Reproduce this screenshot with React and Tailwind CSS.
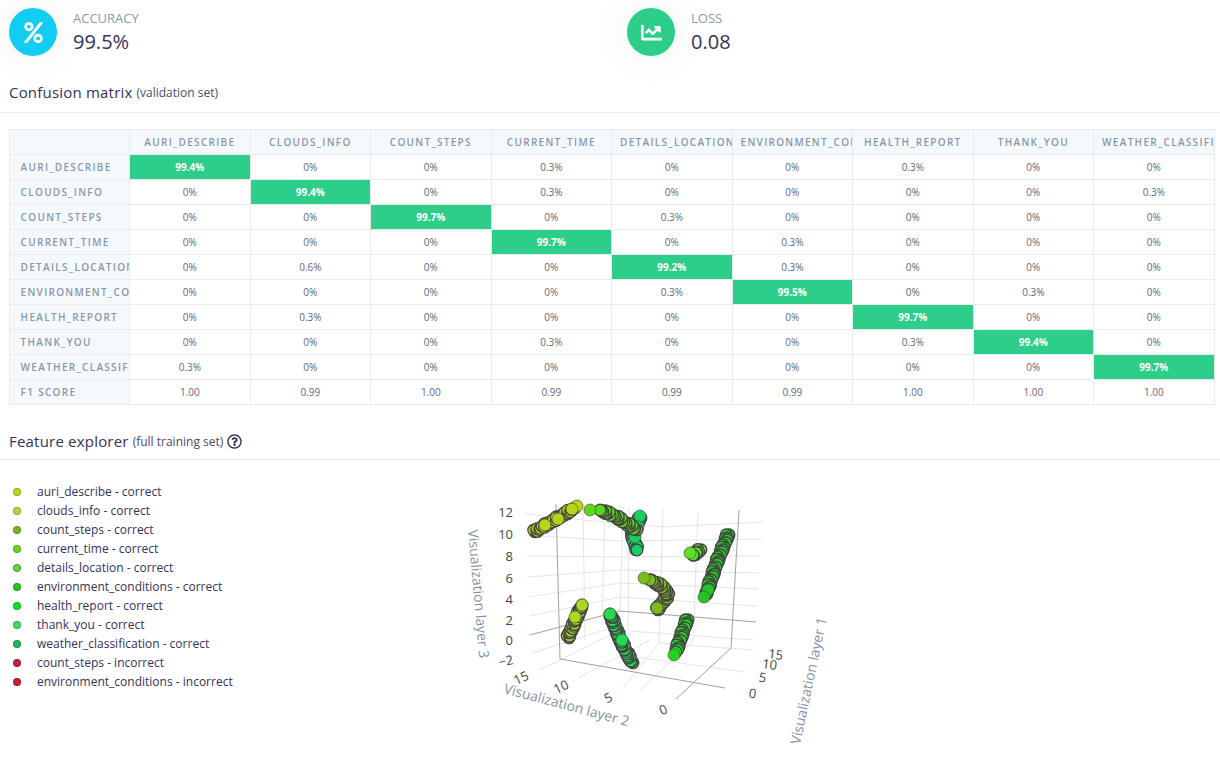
import { FaPercent, FaChartLine, FaRegQuestionCircle } from 'react-icons/fa'

const labels = ['AURI_DESCRIBE', 'CLOUDS_INFO', 'COUNT_STEPS', 'CURRENT_TIME', 'DETAILS_LOCATION', 'ENVIRONMENT_CONDITIONS', 'HEALTH_REPORT', 'THANK_YOU', 'WEATHER_CLASSIFICATION']

const matrix = [
  ['99.4%', '0%', '0%', '0.3%', '0%', '0%', '0.3%', '0%', '0%'],
  ['0%', '99.4%', '0%', '0.3%', '0%', '0%', '0%', '0%', '0.3%'],
  ['0%', '0%', '99.7%', '0%', '0.3%', '0%', '0%', '0%', '0%'],
  ['0%', '0%', '0%', '99.7%', '0%', '0.3%', '0%', '0%', '0%'],
  ['0%', '0.6%', '0%', '0%', '99.2%', '0.3%', '0%', '0%', '0%'],
  ['0%', '0%', '0%', '0%', '0.3%', '99.5%', '0%', '0.3%', '0%'],
  ['0%', '0.3%', '0%', '0%', '0%', '0%', '99.7%', '0%', '0%'],
  ['0%', '0%', '0%', '0.3%', '0%', '0%', '0.3%', '99.4%', '0%'],
  ['0.3%', '0%', '0%', '0%', '0%', '0%', '0%', '0%', '99.7%'],
]
const f1 = ['1.00', '0.99', '1.00', '0.99', '0.99', '0.99', '1.00', '1.00', '1.00']

const legend = [
  ['auri_describe - correct', 'bg-[#bcd916]'],
  ['clouds_info - correct', 'bg-[#a8d93a]'],
  ['count_steps - correct', 'bg-[#74b81c]'],
  ['current_time - correct', 'bg-[#6dd420]'],
  ['details_location - correct', 'bg-[#65d43c]'],
  ['environment_conditions - correct', 'bg-[#2bc41e]'],
  ['health_report - correct', 'bg-[#17dc2c]'],
  ['thank_you - correct', 'bg-[#3ddc5c]'],
  ['weather_classification - correct', 'bg-[#1cb85c]'],
  ['count_steps - incorrect', 'bg-[#c4203c]'],
  ['environment_conditions - incorrect', 'bg-[#c8202c]'],
]

// each run of points goes far end first, the bright ones last so they sit on top
const clusters = [
  { color: '#b9d416', path: [[534, 532], [575, 508]], top: [[577, 506], [572, 509], [558, 519], [545, 525]] },
  { color: '#14cf62', path: [[640, 518], [632, 535], [637, 550]], top: [[640, 516], [638, 527], [635, 537]] },
  { color: '#58d81a', path: [[636, 530], [615, 516], [600, 510]], top: [[590, 510]] },
  { color: '#7cbc1a', path: [[657, 610], [668, 596], [663, 587], [650, 580]], top: [[657, 608], [644, 578]] },
  { color: '#5be02a', path: [[700, 550], [693, 555]], top: [[690, 553]] },
  { color: '#22c522', path: [[728, 535], [716, 565], [706, 595]], top: [[708, 590], [704, 597]] },
  { color: '#a8d820', path: [[568, 638], [575, 622], [582, 605]], top: [[582, 605], [575, 617]] },
  { color: '#20dc50', path: [[632, 663], [620, 640], [610, 614]], top: [[622, 640], [610, 614]] },
  { color: '#1fd51f', path: [[687, 620], [676, 652]], top: [[674, 655]] },
]

function pointsFor(path) {
  const pts = []
  let n = 0
  for (let i = 0; i < path.length - 1; i++) {
    const [x1, y1] = path[i]
    const [x2, y2] = path[i + 1]
    const steps = Math.max(3, Math.round(Math.hypot(x2 - x1, y2 - y1) / 1.2))
    for (let s = 0; s < steps; s++) {
      const t = s / steps
      n++
      // fixed wobble so the run looks like a cloud and not a tube
      pts.push([x1 + (x2 - x1) * t + Math.sin(n * 2.3) * 1.4, y1 + (y2 - y1) * t + Math.cos(n * 1.7) * 1.4])
    }
  }
  pts.push(path[path.length - 1])
  return pts
}

const lightLines = [
  'M525 514L583 520L663 527L763 522',
  'M526 535L620 541L762 539',
  'M527 556L620 557L760 556',
  'M528 577L620 570L759 573',
  'M529 597L620 583L758 589',
  'M530 616L620 597L757 606',
  'M532 653L620 625',
  'M583 506L585 640',
  'M605 507L602 625',
  'M623 508L620 612',
  'M629 508L628 640',
  'M663 510L659 643',
  'M698 512L694 620',
  'M540 670L620 630',
  'M578 678L650 640',
  'M623 688L659 643',
  'M659 643L753 650',
  'M630 631L753 640',
  'M620 655L745 672',
  'M694 620L694 640L640 690',
]

const darkLines = [
  'M530 635L620 611L756 622',
  'M556 504L560 659L725 688',
  'M739 510L731 648L676 699',
]

const zTicks = [['12', 512], ['10', 534], ['8', 556], ['6', 578], ['4', 599], ['2', 620], ['0', 640]]

function FeaturePlot() {
  return (
    <svg viewBox="440 482 400 280" className="w-[400px] h-[280px] shrink-0">
      {lightLines.map((d, i) => <path key={i} d={d} fill="none" stroke="#e4e4e6" strokeWidth="1" />)}
      {darkLines.map((d, i) => <path key={i} d={d} fill="none" stroke="#a2a2a4" strokeWidth="1" />)}
      <circle cx="697" cy="558" r="3" fill="#c0283e" />
      {clusters.map((c, i) => (
        <g key={i}>
          {pointsFor(c.path).map(([x, y], j) => (
            <circle key={j} cx={x} cy={y} r="5.8" fill={c.color} stroke="#444" strokeWidth="1.3" />
          ))}
          {c.top.map(([x, y], j) => (
            <circle key={j} cx={x} cy={y} r="6" fill={c.color} stroke="#4a5a3a" strokeWidth="0.7" />
          ))}
        </g>
      ))}
      {zTicks.map(([t, y]) => (
        <text key={t} x="513" y={y + 5} textAnchor="end" fontSize="13" fill="#444" fontFamily="Open Sans, sans-serif">{t}</text>
      ))}
      <text x="513" y="664" textAnchor="end" fontSize="13" fill="#444" fontFamily="Open Sans, sans-serif" transform="rotate(-12 513 659)">−2</text>
      {[['15', 523, 682], ['10', 563, 691], ['5', 610, 702], ['0', 665, 714]].map(([t, x, y]) => (
        <text key={t} x={x} y={y} textAnchor="middle" fontSize="13" fill="#444" fontFamily="Open Sans, sans-serif" transform={`rotate(-25 ${x} ${y})`}>{t}</text>
      ))}
      {[['15', 775, 659], ['10', 769, 669], ['5', 762, 682], ['0', 752, 698]].map(([t, x, y]) => (
        <text key={t} x={x} y={y} textAnchor="middle" fontSize="13" fill="#444" fontFamily="Open Sans, sans-serif" transform={`rotate(8 ${x} ${y})`}>{t}</text>
      ))}
      <text x="468" y="530" fontSize="14" fill="#8492a6" fontFamily="Open Sans, sans-serif" transform="rotate(85 468 530)">Visualization layer 3</text>
      <text x="503" y="693" fontSize="14" fill="#8492a6" fontFamily="Open Sans, sans-serif" transform="rotate(15 503 693)">Visualization layer 2</text>
      <text x="800" y="745" fontSize="14" fill="#8492a6" fontFamily="Open Sans, sans-serif" transform="rotate(-78 800 745)">Visualization layer 1</text>
    </svg>
  )
}

function Metric({ icon: Icon, bg, size, label, value }) {
  return (
    <div className="flex items-center">
      <div className={`w-12 h-12 rounded-full flex items-center justify-center text-white shadow-[0_0_32px_0_rgba(136,152,170,0.15)] ${bg}`}>
        <Icon size={size} />
      </div>
      <div className="ml-4 h-12 pt-[1px]">
        <div className="text-[13px] leading-[18px] text-[#8898aa]">{label}</div>
        <div className="text-[20px] leading-[30px] text-[#32325d]">{value}</div>
      </div>
    </div>
  )
}

function Heading({ title, note, children }) {
  return (
    <div className="flex items-center h-[26px] pl-[9px] text-[#32325d]">
      <span className="text-[15px] font-medium tracking-[0.2px]">{title}</span>
      <span className="text-[12px] ml-1 mt-[2px] text-[#4a4a6a]">{note}</span>
      {children}
    </div>
  )
}

const headBase = 'h-[25px] overflow-hidden whitespace-nowrap text-[10px] font-semibold tracking-[1.3px] text-[#8898aa] bg-[#f6f9fc] border border-[#e9ecef]'
const cellBase = 'h-[25px] p-0 text-center text-[10px] border border-[#e9ecef]'

export default function App() {
  return (
    <div className="h-[767px] overflow-hidden bg-white font-['Open_Sans',sans-serif]">
      <div className="grid grid-cols-[618px_1fr] pl-[9px] pt-2">
        <Metric icon={FaPercent} size={21} bg="bg-[#11cdef]" label="ACCURACY" value="99.5%" />
        <Metric icon={FaChartLine} size={21} bg="bg-[#2dce89]" label="LOSS" value="0.08" />
      </div>

      <div className="mt-[23px]">
        <Heading title="Confusion matrix" note="(validation set)" />
      </div>
      <div className="mt-[7px] border-t border-[#e9ecef]" />

      <div className="mt-4 pl-[8.6px]">
        <table className="table-fixed w-[1206px] border-collapse">
          <thead>
            <tr>
              <th className={headBase}></th>
              {labels.map((l) => <th key={l} className={`${headBase} px-2 text-center`}>{l}</th>)}
            </tr>
          </thead>
          <tbody>
            {matrix.map((row, r) => (
              <tr key={r}>
                <th className={`${headBase} pl-[11px] text-left`}>{labels[r]}</th>
                {row.map((v, c) => (
                  <td
                    key={c}
                    className={r === c
                      ? `${cellBase} font-bold text-white bg-[#2dce89]`
                      : `${cellBase} text-[#62667a]`}
                  >
                    {v}
                  </td>
                ))}
              </tr>
            ))}
            <tr>
              <th className={`${headBase} pl-[11px] text-left`}>F1 SCORE</th>
              {f1.map((v, c) => (
                <td key={c} className={`${cellBase} text-[#62667a]`}>{v}</td>
              ))}
            </tr>
          </tbody>
        </table>
      </div>

      <div className="mt-[23px]">
        <Heading title="Feature explorer" note="(full training set)">
          <FaRegQuestionCircle size={15} className="ml-1" />
        </Heading>
      </div>
      <div className="mt-[5px] border-t border-[#e9ecef]" />

      <div className="flex mt-[22px]">
        <ul className="w-[440px] shrink-0 pl-[13px]">
          {legend.map(([text, color]) => (
            <li key={text} className="flex items-center h-[19px]">
              <span className={`w-2 h-2 rounded-full border border-black/20 ${color}`} />
              <span className="ml-4 text-[12px] text-[#32325d]">{text}</span>
            </li>
          ))}
        </ul>
        <FeaturePlot />
      </div>
    </div>
  )
}
